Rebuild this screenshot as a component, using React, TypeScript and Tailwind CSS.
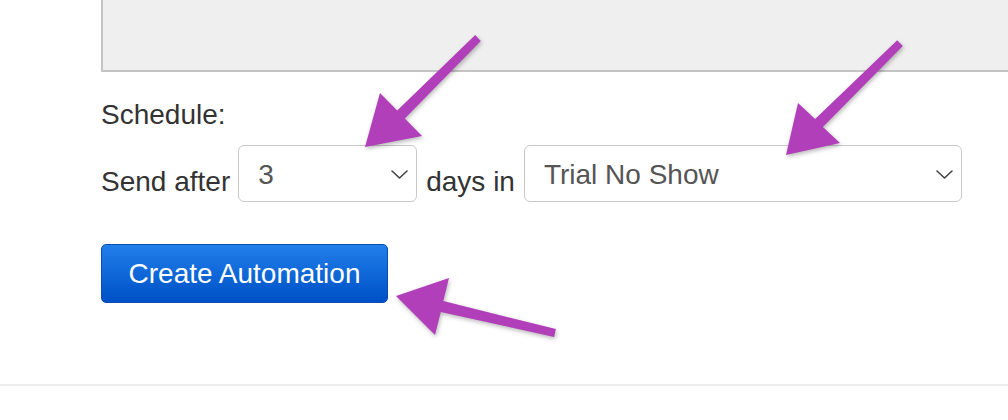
import React from "react";

function Chevron() {
  return (
    <svg width="17" height="9" viewBox="0 0 17 9" fill="none">
      <path d="M1 1 L8.5 8 L16 1" stroke="#444" strokeWidth="1.6" strokeLinecap="round" strokeLinejoin="round" />
    </svg>
  );
}

type FakeSelectProps = {
  value: string;
  className: string;
};

function FakeSelect({ value, className }: FakeSelectProps) {
  return (
    <div
      className={`flex h-[57px] items-center justify-between rounded-[6px] border-[1.5px] border-[#c9c9c9] bg-white pt-[2px] pl-[19px] pr-[8px] text-[28px] leading-[28px] text-[#555] ${className}`}
    >
      <span>{value}</span>
      <Chevron />
    </div>
  );
}

// the purple callout arrows drawn over the form
function Arrows() {
  return (
    <svg
      className="pointer-events-none absolute top-0 left-0"
      width="1008"
      height="420"
      viewBox="0 0 1008 420"
      style={{ filter: "drop-shadow(1px 2px 2px rgba(0,0,0,0.28))" }}
    >
      <polygon
        fill="#b13fb9"
        points="365,147 380,93 397.2,110.5 475.2,35.1 480.8,40.9 404.8,118.5 422,136"
      />
      <polygon
        fill="#b13fb9"
        points="786,155 798,103 815.1,119 897.2,40.2 902.8,45.9 822.9,127 840,143"
      />
      <polygon
        fill="#b13fb9"
        points="396,296 449,278 443.3,301.1 555.9,329.1 554.1,336.9 440.8,311.9 435,335"
      />
    </svg>
  );
}

export default function App() {
  return (
    <div className="relative h-[420px] w-[1008px] overflow-hidden bg-white font-['Liberation_Sans',Arial,sans-serif] text-[#333]">
      <div className="pl-[101px]">
        <div className="h-[72px] w-[1000px] border-b-2 border-l-2 border-[#c4c4c4] bg-[#efefef]" />

        <p className="mt-[29px] text-[28px] leading-[28px]">Schedule:</p>

        <div className="mt-[16px] flex items-start gap-2">
          <span className="mt-[23px] text-[28px] leading-[28px]">Send after</span>
          <FakeSelect value="3" className="w-[179px]" />
          <span className="mt-[23px] ml-px text-[28px] leading-[28px]">days in</span>
          <FakeSelect value="Trial No Show" className="ml-px w-[438px]" />
        </div>

        <button className="mt-[42px] flex h-[59px] w-[287px] items-center justify-center rounded-[5px] border border-[#0b4db0] bg-linear-to-b from-[#217fea] to-[#0050c6] pt-px text-[28px] leading-[28px] text-white">
          Create Automation
        </button>
      </div>

      <div className="mt-[81px] border-t-2 border-[#ececec]" />

      <Arrows />
    </div>
  );
}
